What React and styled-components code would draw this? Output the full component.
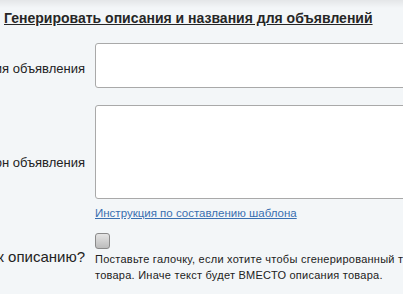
import React from 'react';
import styled, { createGlobalStyle } from 'styled-components';

const GlobalStyle = createGlobalStyle`
  html, body {
    margin: 0;
    padding: 0;
    background: #f3f6f8;
    font-family: Arial, "Liberation Sans", sans-serif;
    overflow: hidden;
  }
`;

const Page = styled.div`
  width: 403px;
  height: 294px;
  background: linear-gradient(to bottom, #e4e6e8 0px, #f3f6f8 8px);
  overflow: hidden;
  padding-top: 10px;
  box-sizing: border-box;
`;

const Title = styled.h3`
  margin: 0 0 0 4px;
  font-size: 14px;
  font-weight: bold;
  color: #262626;
  text-decoration: underline;
  white-space: nowrap;
  line-height: 16px;
`;

const Form = styled.div`
  display: grid;
  grid-template-columns: 85px 1fr;
  column-gap: 10px;
  margin-top: 17px;
`;

const Label = styled.div`
  display: flex;
  justify-content: flex-end;
  align-items: center;
  white-space: nowrap;
  font-size: ${(p) => p.$size || 13}px;
  color: #222;
  padding-top: ${(p) => p.$shift || 0}px;
  padding-bottom: ${(p) => p.$lift || 0}px;
  margin-bottom: ${(p) => p.$gap || 0}px;
`;

const Field = styled.div`
  display: flex;
  flex-direction: column;
  align-items: flex-start;
  margin-bottom: ${(p) => p.$gap || 0}px;
`;

const TextInput = styled.input`
  width: 400px;
  height: 45px;
  box-sizing: border-box;
  border: 1px solid #a9a9a9;
  border-radius: 3px;
  background: #fff;
`;

const TextArea = styled.textarea`
  width: 400px;
  height: 94px;
  box-sizing: border-box;
  border: 1px solid #a9a9a9;
  border-radius: 3px;
  background: #fff;
  resize: none;
  margin: 0;
`;

const HelpLink = styled.a`
  margin-top: 7px;
  font-size: 11.5px;
  color: #3a6fb0;
  text-decoration: underline;
  line-height: 14px;
`;

const CheckBox = styled.span`
  width: 15px;
  height: 16px;
  box-sizing: border-box;
  border: 1px solid #8a8a8a;
  border-radius: 3px;
  background: linear-gradient(to bottom, #e4e4e4, #bcbcbc);
  margin-bottom: 2px;
`;

const Hint = styled.div`
  font-size: 11px;
  letter-spacing: 0.25px;
  line-height: 16px;
  color: #222;
  white-space: nowrap;
`;

export default function App() {
  return (
    <>
      <GlobalStyle />
      <Page>
        <Title>Генерировать описания и названия для объявлений</Title>
        <Form>
          <Label $shift={6} $gap={17}>Шаблон названия объявления</Label>
          <Field $gap={17}>
            <TextInput type="text" />
          </Field>

          <Label $gap={13}>Описание: шаблон объявления</Label>
          <Field $gap={13}>
            <TextArea />
            <HelpLink href="#">Инструкция по составлению шаблона</HelpLink>
          </Field>

          <Label $size={15} $lift={3}>Добавить к описанию?</Label>
          <Field>
            <CheckBox />
            <Hint>
              Поставьте галочку, если хотите чтобы сгенерированный текст добавлялся к описанию
              <br />
              товара. Иначе текст будет ВМЕСТО описания товара.
            </Hint>
          </Field>
        </Form>
      </Page>
    </>
  );
}
